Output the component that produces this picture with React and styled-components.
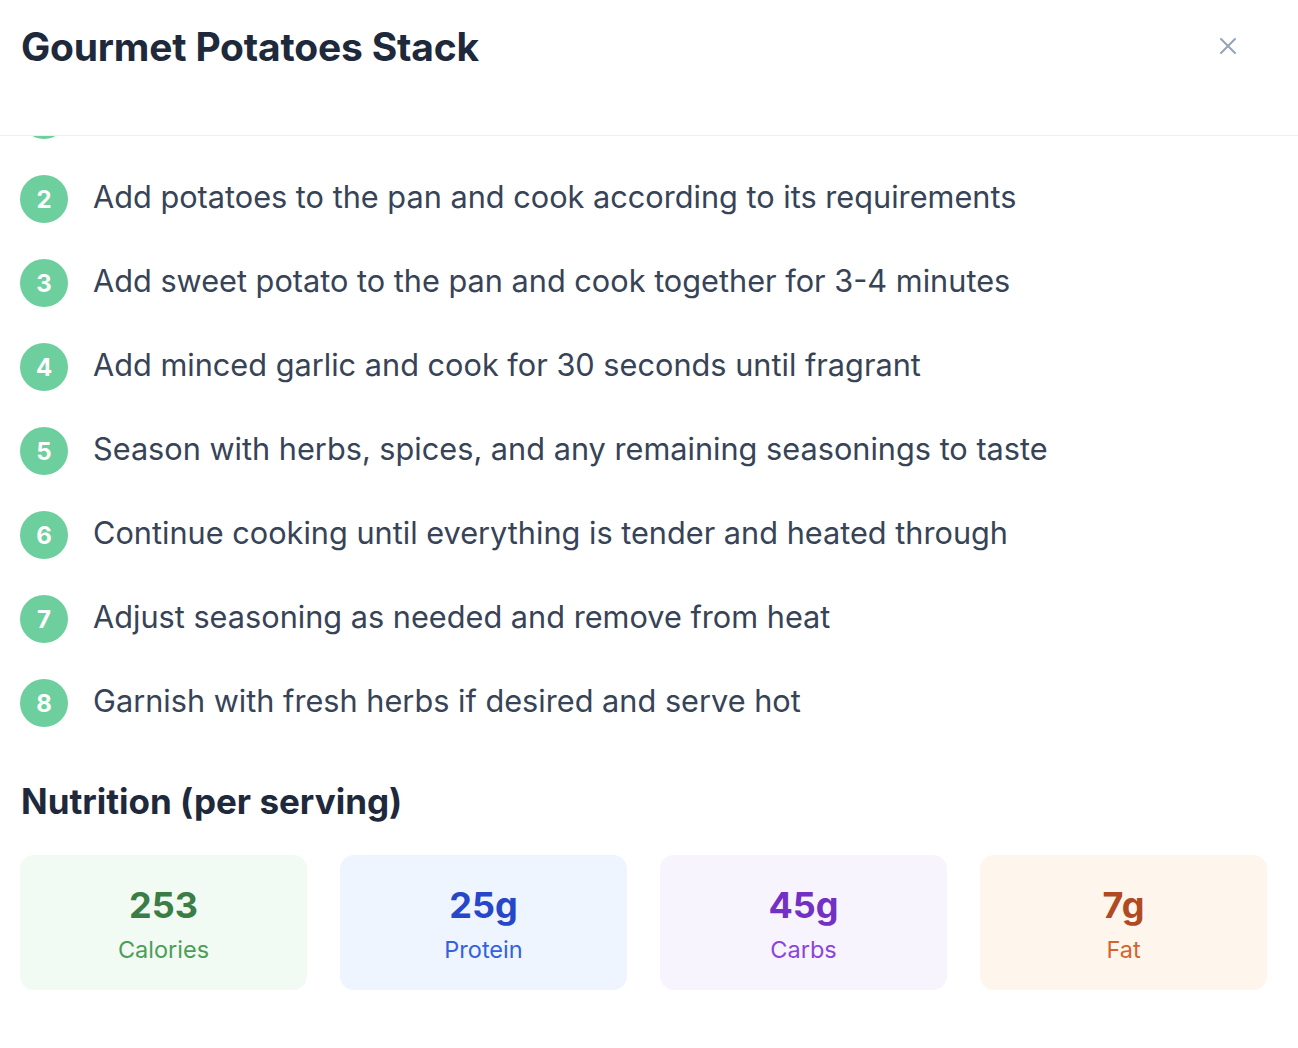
import React, { useLayoutEffect, useRef } from "react";
import styled, { createGlobalStyle } from "styled-components";

const GlobalStyle = createGlobalStyle`
  html, body {
    margin: 0;
    padding: 0;
    background: #ffffff;
    font-family: Inter, "Noto Sans", "Liberation Sans", sans-serif;
    -webkit-font-smoothing: antialiased;
  }
  * { box-sizing: border-box; }
`;

const steps = [
  "Heat oil in a large pan over medium heat",
  "Add potatoes to the pan and cook according to its requirements",
  "Add sweet potato to the pan and cook together for 3-4 minutes",
  "Add minced garlic and cook for 30 seconds until fragrant",
  "Season with herbs, spices, and any remaining seasonings to taste",
  "Continue cooking until everything is tender and heated through",
  "Adjust seasoning as needed and remove from heat",
  "Garnish with fresh herbs if desired and serve hot",
];

const nutrition = [
  { value: "253", label: "Calories", bg: "#f1fbf3", fg: "#3a7d45", sub: "#4b9e55" },
  { value: "25g", label: "Protein", bg: "#eef5fe", fg: "#2747c9", sub: "#3461de" },
  { value: "45g", label: "Carbs", bg: "#f7f4fe", fg: "#7330c4", sub: "#8a45dc" },
  { value: "7g", label: "Fat", bg: "#fef6ed", fg: "#b04a23", sub: "#d4632c" },
];

const Modal = styled.div`
  height: 100vh;
  display: flex;
  flex-direction: column;
  background: #fff;
`;

const Header = styled.header`
  height: 136px;
  flex-shrink: 0;
  display: flex;
  align-items: flex-start;
  justify-content: space-between;
  padding: 22px 58px 0 21px;
  border-bottom: 1px solid #eeeff1;
`;

const Title = styled.h1`
  margin: 0;
  font-size: 39px;
  line-height: 50px;
  font-weight: 700;
  color: #1e293b;
  letter-spacing: -0.2px;
`;

const CloseButton = styled.button`
  border: none;
  background: none;
  padding: 0;
  margin-top: 12px;
  width: 24px;
  height: 24px;
  color: #94a3b8;
  cursor: pointer;
`;

const Body = styled.div`
  flex: 1;
  overflow-y: auto;
  padding: 24px 31px 58px 20px;
  scrollbar-width: none;
  &::-webkit-scrollbar { display: none; }
`;

const StepList = styled.ol`
  list-style: none;
  margin: 0 0 50px;
  padding: 0;
  display: flex;
  flex-direction: column;
  gap: 36px;
`;

const Step = styled.li`
  display: flex;
  align-items: center;
  gap: 25px;
`;

const StepNumber = styled.span`
  flex-shrink: 0;
  width: 48px;
  height: 48px;
  border-radius: 50%;
  background: #6dcf9d;
  color: #fff;
  font-size: 24px;
  font-weight: 700;
  display: flex;
  align-items: center;
  justify-content: center;
`;

const StepText = styled.p`
  margin: -5px 0 0;
  font-size: 30.7px;
  line-height: 44px;
  color: #374357;
`;

const SectionTitle = styled.h2`
  margin: 0 0 30px 1px;
  font-size: 35px;
  line-height: 48px;
  font-weight: 700;
  color: #1e293b;
`;

const Grid = styled.div`
  display: grid;
  grid-template-columns: repeat(4, 1fr);
  gap: 33px;
`;

const Card = styled.div`
  height: 135px;
  padding-top: 3px;
  border-radius: 14px;
  background: ${(p) => p.$bg};
  display: flex;
  flex-direction: column;
  align-items: center;
  justify-content: center;
  gap: 7px;
`;

const Value = styled.div`
  font-size: 36px;
  line-height: 44px;
  font-weight: 700;
  color: ${(p) => p.$color};
`;

const Label = styled.div`
  font-size: 23.5px;
  line-height: 32px;
  color: ${(p) => p.$color};
`;

export default function App() {
  const bodyRef = useRef(null);

  useLayoutEffect(() => {
    if (bodyRef.current) bodyRef.current.scrollTop = bodyRef.current.scrollHeight;
  }, []);

  return (
    <>
      <GlobalStyle />
      <Modal>
        <Header>
          <Title>Gourmet Potatoes Stack</Title>
          <CloseButton aria-label="Close">
            <svg width="24" height="24" viewBox="0 0 24 24" fill="none" stroke="currentColor" strokeWidth="2" strokeLinecap="round">
              <path d="M5 5l14 14M19 5L5 19" />
            </svg>
          </CloseButton>
        </Header>
        <Body ref={bodyRef}>
          <StepList>
            {steps.map((s, i) => (
              <Step key={i}>
                <StepNumber>{i + 1}</StepNumber>
                <StepText>{s}</StepText>
              </Step>
            ))}
          </StepList>
          <SectionTitle>Nutrition (per serving)</SectionTitle>
          <Grid>
            {nutrition.map((n) => (
              <Card key={n.label} $bg={n.bg}>
                <Value $color={n.fg}>{n.value}</Value>
                <Label $color={n.sub}>{n.label}</Label>
              </Card>
            ))}
          </Grid>
        </Body>
      </Modal>
    </>
  );
}
